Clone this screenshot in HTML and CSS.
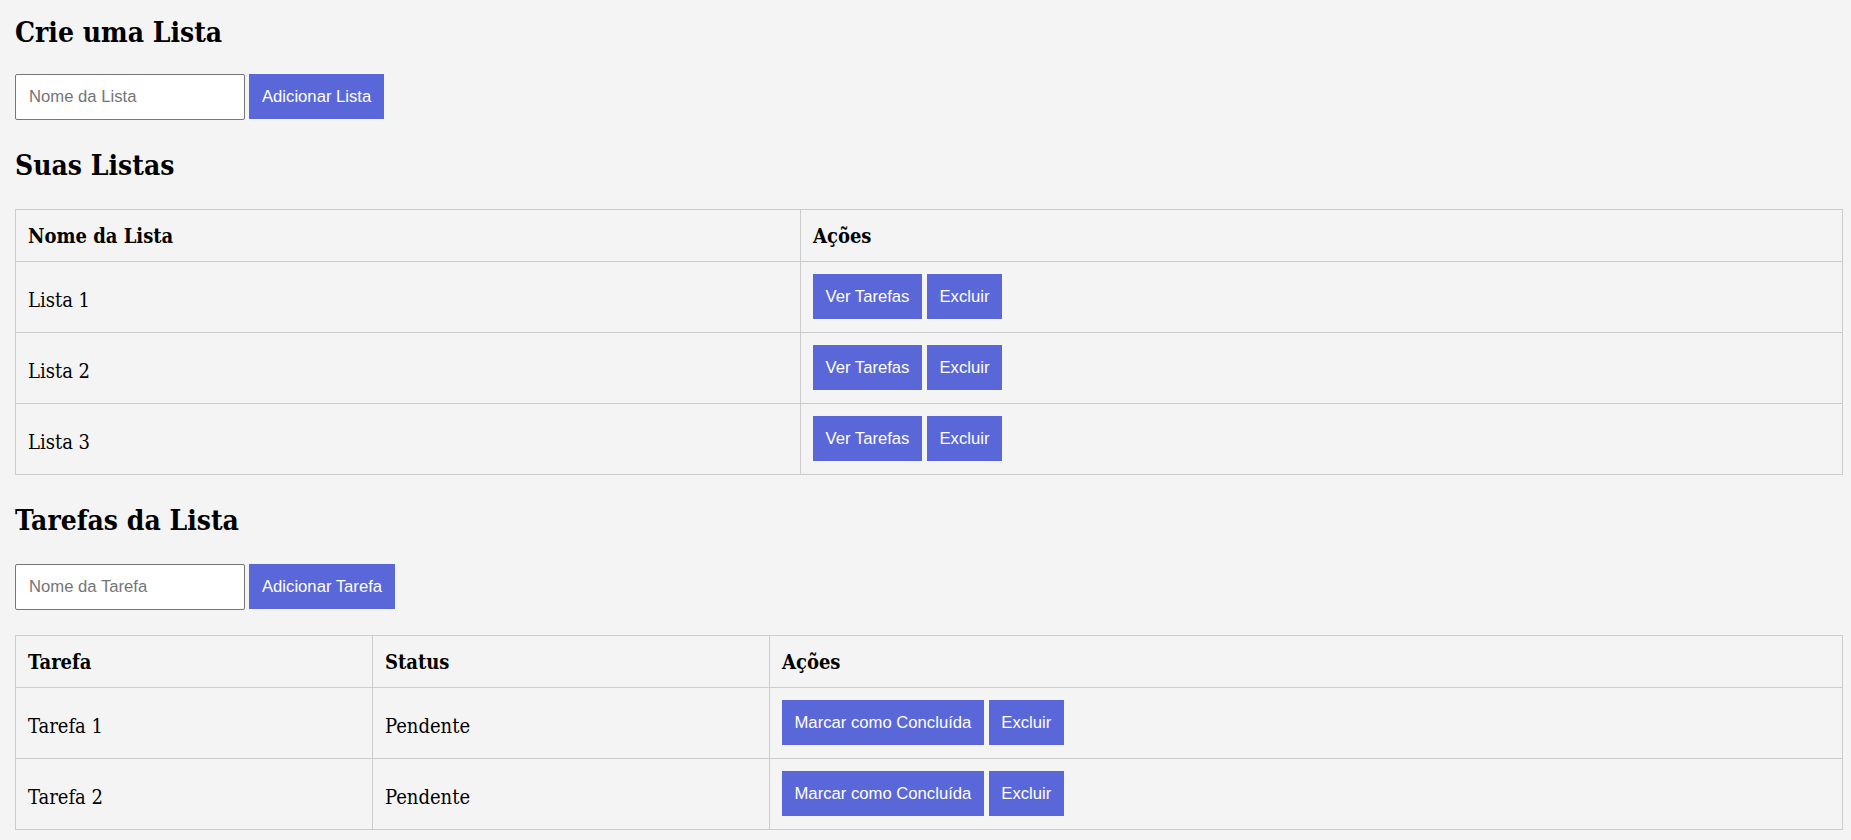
FILE: index.html
```html
<!DOCTYPE html>
<html lang="pt-BR">
<head>
<meta charset="utf-8">
<title>Listas de Tarefas</title>
<link rel="stylesheet" href="styles.css">
</head>
<body>
  <h2 class="title first">Crie uma Lista</h2>
  <div class="form-row">
    <input class="text-input" type="text" placeholder="Nome da Lista">
    <button class="btn btn-form">Adicionar Lista</button>
  </div>

  <h2 class="title">Suas Listas</h2>
  <table class="data-table">
    <colgroup>
      <col class="col-list-name">
      <col>
    </colgroup>
    <thead>
      <tr><th>Nome da Lista</th><th>Ações</th></tr>
    </thead>
    <tbody>
      <tr>
        <td>Lista 1</td>
        <td class="action-cell"><div class="actions"><button class="btn">Ver Tarefas</button><button class="btn">Excluir</button></div></td>
      </tr>
      <tr>
        <td>Lista 2</td>
        <td class="action-cell"><div class="actions"><button class="btn">Ver Tarefas</button><button class="btn">Excluir</button></div></td>
      </tr>
      <tr>
        <td>Lista 3</td>
        <td class="action-cell"><div class="actions"><button class="btn">Ver Tarefas</button><button class="btn">Excluir</button></div></td>
      </tr>
    </tbody>
  </table>

  <h2 class="title">Tarefas da Lista</h2>
  <div class="form-row">
    <input class="text-input" type="text" placeholder="Nome da Tarefa">
    <button class="btn btn-form">Adicionar Tarefa</button>
  </div>

  <table class="data-table">
    <colgroup>
      <col class="col-task">
      <col class="col-status">
      <col>
    </colgroup>
    <thead>
      <tr><th>Tarefa</th><th>Status</th><th>Ações</th></tr>
    </thead>
    <tbody>
      <tr>
        <td>Tarefa 1</td>
        <td>Pendente</td>
        <td class="action-cell"><div class="actions"><button class="btn">Marcar como Concluída</button><button class="btn">Excluir</button></div></td>
      </tr>
      <tr>
        <td>Tarefa 2</td>
        <td>Pendente</td>
        <td class="action-cell"><div class="actions"><button class="btn">Marcar como Concluída</button><button class="btn">Excluir</button></div></td>
      </tr>
    </tbody>
  </table>
</body>
</html>
```

FILE: styles.css
```css
html, body {
  background: #f4f4f4;
}

body {
  margin: 0;
  padding: 0 8px 0 15px;
  font-family: "DejaVu Serif Condensed", "DejaVu Serif", serif;
  font-stretch: condensed;
  font-size: 20px;
  color: #000;
}

.title {
  font-size: 28px;
  line-height: 40px;
  font-weight: bold;
  margin: 26px 0 23px;
}

.title.first {
  margin-top: 13px;
  margin-bottom: 21px;
}

.form-row {
  display: flex;
  gap: 4px;
  align-items: flex-start;
  margin-bottom: 25px;
}

.text-input {
  box-sizing: border-box;
  width: 230px;
  height: 46px;
  padding: 0 13px;
  border: 1px solid #767676;
  border-radius: 2px;
  background: #fff;
  font-family: "Liberation Sans", Arial, sans-serif;
  font-size: 16.67px;
  color: #000;
  outline: none;
}

.text-input::placeholder {
  color: #757575;
}

.btn {
  box-sizing: border-box;
  height: 45px;
  padding: 0 12.5px;
  border: none;
  background: #5a67d8;
  color: #fff;
  font-family: "Liberation Sans", Arial, sans-serif;
  font-size: 16.67px;
  line-height: 45px;
  white-space: nowrap;
  cursor: pointer;
}

.btn-form {
  padding: 0 13px;
}

.data-table {
  width: 100%;
  border-collapse: collapse;
}

.data-table th,
.data-table td {
  border: 1px solid #ccc;
  padding: 12px;
  text-align: left;
  vertical-align: middle;
  line-height: 27px;
}

.data-table th {
  font-weight: bold;
  padding-top: 13px;
  padding-bottom: 11px;
}

.data-table td {
  padding-top: 16px;
  padding-bottom: 9px;
}

.data-table td.action-cell {
  padding-top: 12px;
  padding-bottom: 13px;
}

.actions {
  display: flex;
  gap: 5px;
}

.col-list-name {
  width: 785px;
}

.col-task {
  width: 357px;
}

.col-status {
  width: 397px;
}
```
